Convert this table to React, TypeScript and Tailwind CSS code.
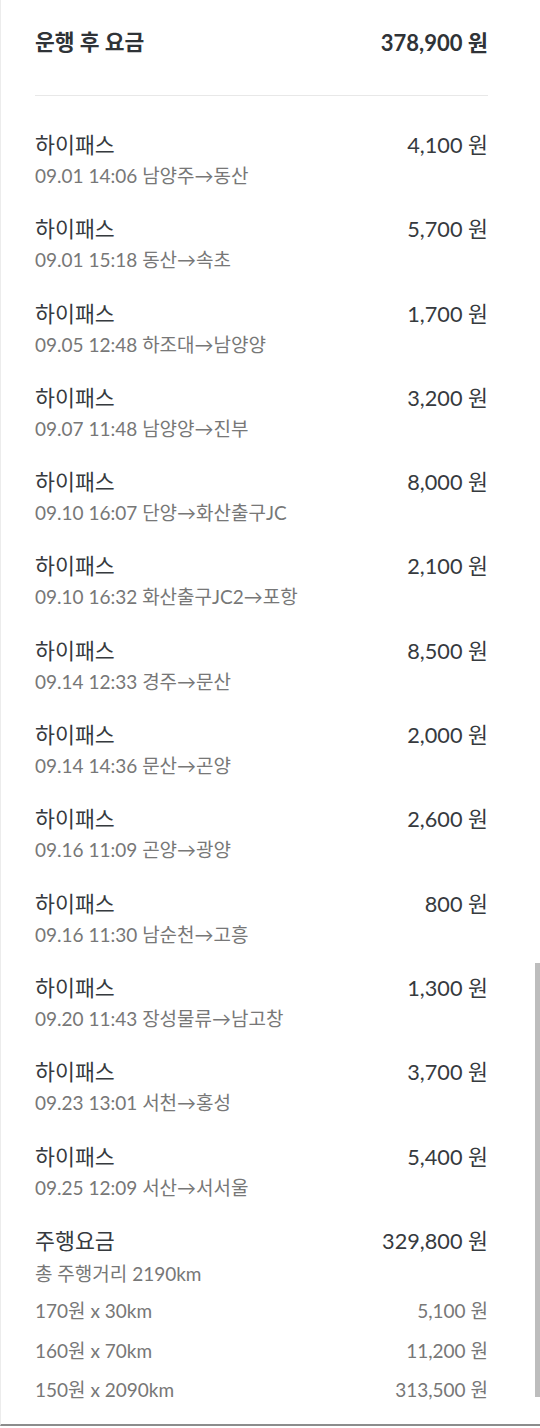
const trips = [
  { time: "09.01 14:06", route: "남양주→동산", fee: "4,100" },
  { time: "09.01 15:18", route: "동산→속초", fee: "5,700" },
  { time: "09.05 12:48", route: "하조대→남양양", fee: "1,700" },
  { time: "09.07 11:48", route: "남양양→진부", fee: "3,200" },
  { time: "09.10 16:07", route: "단양→화산출구JC", fee: "8,000" },
  { time: "09.10 16:32", route: "화산출구JC2→포항", fee: "2,100" },
  { time: "09.14 12:33", route: "경주→문산", fee: "8,500" },
  { time: "09.14 14:36", route: "문산→곤양", fee: "2,000" },
  { time: "09.16 11:09", route: "곤양→광양", fee: "2,600" },
  { time: "09.16 11:30", route: "남순천→고흥", fee: "800" },
  { time: "09.20 11:43", route: "장성물류→남고창", fee: "1,300" },
  { time: "09.23 13:01", route: "서천→홍성", fee: "3,700" },
  { time: "09.25 12:09", route: "서산→서서울", fee: "5,400" },
];

const tiers = [
  { label: "170원 x 30km", amount: "5,100" },
  { label: "160원 x 70km", amount: "11,200" },
  { label: "150원 x 2090km", amount: "313,500" },
];

export default function App() {
  return (
    <div
      className="relative h-[1428px] w-[540px] overflow-hidden bg-white"
      style={{ fontFamily: "Lato, 'Noto Sans CJK KR', sans-serif" }}
    >
      <div className="h-[1426px] border-b-2 border-l border-b-[#8c8c8c] border-l-[#ececec] pl-[34px] pr-[52px]">
        {/* header */}
        <div className="flex h-[84px] items-center justify-between text-[22px] font-bold text-[#2f3337]">
          <span className="text-[21.5px]">운행 후 요금</span>
          <span>378,900 원</span>
        </div>
        <div className="mt-[11px] h-px bg-[#e8e8e8]" />

        {/* trips */}
        <div className="pt-[34px]">
          {trips.map((t, i) => (
            <div key={i} className="pb-[22.3px]">
              <div className="flex justify-between text-[21.7px] leading-[30px] text-[#363a3e]">
                <span>하이패스</span>
                <span>{t.fee} 원</span>
              </div>
              <div className="text-[19px] leading-[32px] text-[#777]">
                {t.time} {t.route}
              </div>
            </div>
          ))}
        </div>

        {/* summary */}
        <div className="flex justify-between text-[21.7px] leading-[30px] text-[#363a3e]">
          <span>주행요금</span>
          <span>329,800 원</span>
        </div>
        <div className="text-[19px] leading-[36px] text-[#777]">총 주행거리 2190km</div>
        {tiers.map((r) => (
          <div key={r.label} className="flex h-[39.5px] items-center justify-between text-[19px] text-[#777]">
            <span>{r.label}</span>
            <span>{r.amount} 원</span>
          </div>
        ))}
      </div>

      {/* scrollbar thumb */}
      <div className="absolute right-0 top-[963px] h-[434px] w-[5px] bg-[#bdbdbd]" />
    </div>
  );
}
